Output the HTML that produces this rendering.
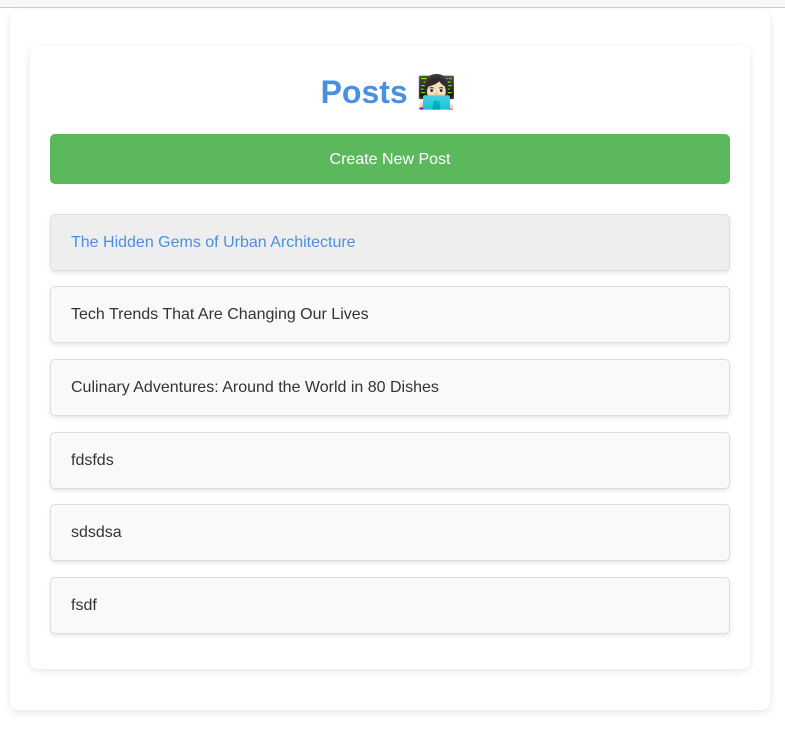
<!DOCTYPE html>
<html><head><meta charset="utf-8"><style>
*{box-sizing:border-box;margin:0;padding:0}
html,body{width:785px;height:744px;background:#fff;font-family:"Liberation Sans",sans-serif;overflow:hidden}
.top{position:absolute;left:0;top:0;width:785px;height:8px;background:#f8f8f8;border-bottom:1px solid #ccc}
.outer{position:absolute;left:10px;top:10px;width:760px;height:700px;background:#fff;border-radius:8px;box-shadow:0 2px 8px rgba(0,0,0,.1)}
.inner{position:absolute;left:30px;top:46px;width:720px;height:623px;background:#fff;border-radius:8px;box-shadow:0 2px 8px rgba(0,0,0,.1)}
h1{position:absolute;left:-4px;top:70px;width:785px;text-align:center;font-size:32px;font-weight:bold;color:#4a90e2;line-height:44px}
.btn{position:absolute;left:50px;top:134px;width:680px;height:50px;background:#5cb85c;border-radius:5px;color:#fff;font-size:16px;text-align:center;line-height:51px}
.item{position:absolute;left:50px;width:680px;height:57px;background:#f9f9f9;border:1px solid #ddd;border-radius:5px;box-shadow:0 2px 4px rgba(0,0,0,.1);padding-left:20px;line-height:56px;font-size:16px;color:#333}
.item.a{background:#eee;color:#4a90e2}
</style></head><body>
<div class="top"></div>
<div class="outer"></div>
<div class="inner"></div>
<h1>Posts <span style="font-family:'Noto Color Emoji',sans-serif">👩🏻‍💻</span></h1>
<div class="btn">Create New Post</div>
<div class="item a" style="top:214px">The Hidden Gems of Urban Architecture</div>
<div class="item" style="top:286px">Tech Trends That Are Changing Our Lives</div>
<div class="item" style="top:359px">Culinary Adventures: Around the World in 80 Dishes</div>
<div class="item" style="top:432px">fdsfds</div>
<div class="item" style="top:504px">sdsdsa</div>
<div class="item" style="top:577px">fsdf</div>
</body></html>
